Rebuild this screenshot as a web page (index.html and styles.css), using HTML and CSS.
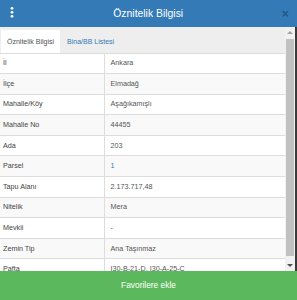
FILE: index.html
```html
<html><head><title>Öznitelik Bilgisi</title>
<meta http-equiv="content-type" content="text/html; charset=UTF-8">
<link rel="stylesheet" href="styles.css">
</head>
<body>
<div class="panel">
<div class="head">
	<svg class="kebab" width="6" height="14" viewBox="0 0 6 14"><circle cx="3" cy="2.3" r="1.4"/><circle cx="3" cy="6.3" r="1.4"/><circle cx="3" cy="10.3" r="1.4"/></svg>
	<span class="title">Öznitelik Bilgisi</span>
	<span class="close">&times;</span>
</div>
<div class="main">
	<div class="scroll">
		<div class="tabs">
			<span class="tab active">Öznitelik Bilgisi</span>
			<span class="tab">Bina/BB Listesi</span>
		</div>
		<table class="info">
			<tr><td class="k">İl</td><td>Ankara</td></tr>
			<tr><td class="k">İlçe</td><td>Elmadağ</td></tr>
			<tr><td class="k">Mahalle/Köy</td><td>Aşağıkamışlı</td></tr>
			<tr><td class="k">Mahalle No</td><td>44455</td></tr>
			<tr><td class="k">Ada</td><td>203</td></tr>
			<tr><td class="k">Parsel</td><td class="lnk">1</td></tr>
			<tr><td class="k">Tapu Alanı</td><td>2.173.717,48</td></tr>
			<tr><td class="k">Nitelik</td><td>Mera</td></tr>
			<tr><td class="k">Mevkii</td><td>-</td></tr>
			<tr><td class="k">Zemin Tip</td><td>Ana Taşınmaz</td></tr>
			<tr><td class="k">Pafta</td><td>I30-B-21-D, I30-A-25-C</td></tr>
		</table>
	</div>
	<div class="bar">
		<span class="up"></span>
		<div class="track"><div class="thumb"></div></div>
		<span class="down"></span>
	</div>
	<div class="edge"></div>
</div>
<div class="foot">Favorilere ekle</div>
</div>
</body></html>
```

FILE: styles.css
```css
body{margin:0;font-family:"Liberation Sans",Arial,sans-serif;background:#fff;}
.panel{width:297px;height:300px;display:flex;flex-direction:column;overflow:hidden;}
.head{height:27px;flex:none;background:#337ab7;display:flex;align-items:center;padding:0 8px 0 9px;color:#fff;}
.kebab{fill:#fff;margin-top:-1px;}
.title{flex:1;text-align:center;font-size:10.4px;}
.close{font-size:13px;font-weight:bold;color:rgba(0,0,0,.3);line-height:1;}
.main{flex:1;display:flex;min-height:0;}
.scroll{flex:1;overflow:hidden;background:#eee;}
.tabs{height:23px;padding:2.5px 0 0 1px;display:flex;}
.tab{padding:0 6px;line-height:23px;font-size:7px;color:#337ab7;white-space:nowrap;}
.tab.active{background:#fff;color:#555;margin-right:1px;}
.info{width:100%;border-collapse:collapse;background:#fff;font-size:7.2px;color:#555;}
.info td{padding:4.8px 4px 4.8px 5.5px;line-height:10px;border-top:1px solid #ddd;white-space:nowrap;}
.info tr:nth-child(even) td{background:#f9f9f9;}
.info td.k{width:97px;padding-left:3px;color:#444;border-right:1px solid #ddd;}
.info tr td.lnk{color:#337ab7;}
.bar{width:10px;background:#f1f1f1;display:flex;flex-direction:column;align-items:center;}
.up,.down{width:0;border-left:3px solid transparent;border-right:3px solid transparent;height:0;}
.up{border-bottom:3px solid #a3a3a3;margin:4px 0 5px;}
.down{border-top:3px solid #505050;margin:5px 0 4px;}
.track{flex:1;width:8px;}
.thumb{height:217px;background:#c1c1c1;}
.edge{width:2px;background:#3a3a3a;}
.foot{height:29px;flex:none;background:#5cb85c;color:#fff;font-size:8.4px;text-align:center;line-height:29px;}
```
